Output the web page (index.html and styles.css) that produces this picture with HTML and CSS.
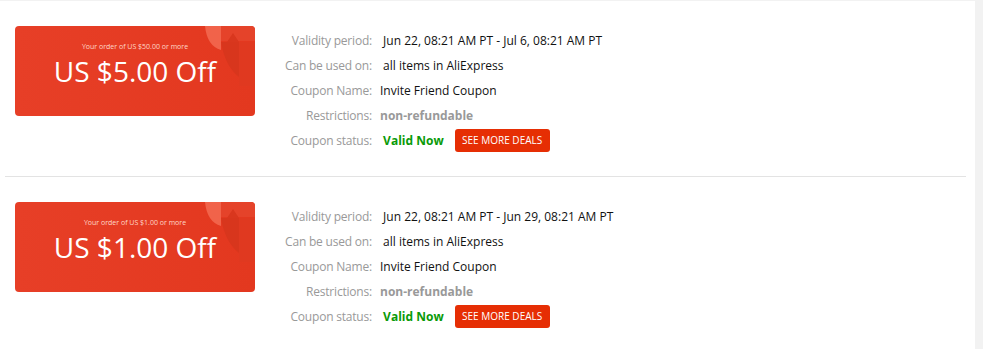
FILE: index.html
```html
<!DOCTYPE html>
<html>

<head>
    <meta charset="utf-8" />
    <title>My Coupons</title>
    <link rel="stylesheet" href="styles.css">
</head>

<body>
    <div class="panel">
        <div class="coupon">
            <div class="card">
                <svg class="deco" width="70" height="90" viewBox="0 0 70 90">
                    <path d="M0 0 H16 V24 Q2 20 0 0 Z" fill="#f1634a" />
                    <path d="M16 0 H50 V15 H16 Z" fill="#e5432a" />
                    <path d="M28 7 L34 16 H22 Z" fill="#d9371e" />
                    <path d="M16 16 H34 V51 Q20 40 16 16 Z" fill="#d8361d" />
                    <path d="M34 16 H50 V60 H34 Z" fill="#e03920" />
                </svg>
                <p class="min">Your order of US $50.00 or more</p>
                <p class="amount">US $5.00 Off</p>
            </div>
            <div class="details">
                <span class="label">Validity period:</span>
                <span class="value">&nbsp;Jun 22, 08:21 AM PT - Jul 6, 08:21 AM PT</span>
                <span class="label">Can be used on:</span>
                <span class="value">&nbsp;all items in AliExpress</span>
                <span class="label">Coupon Name:</span>
                <span class="value">Invite Friend Coupon</span>
                <span class="label">Restrictions:</span>
                <span class="value muted">non-refundable</span>
                <span class="label">Coupon status:</span>
                <span class="value"><b class="valid">&nbsp;Valid Now</b><a class="btn" href="#">SEE MORE DEALS</a></span>
            </div>
        </div>
        <div class="coupon">
            <div class="card">
                <svg class="deco" width="70" height="90" viewBox="0 0 70 90">
                    <path d="M0 0 H16 V24 Q2 20 0 0 Z" fill="#f1634a" />
                    <path d="M16 0 H50 V15 H16 Z" fill="#e5432a" />
                    <path d="M28 7 L34 16 H22 Z" fill="#d9371e" />
                    <path d="M16 16 H34 V51 Q20 40 16 16 Z" fill="#d8361d" />
                    <path d="M34 16 H50 V60 H34 Z" fill="#e03920" />
                </svg>
                <p class="min">Your order of US $1.00 or more</p>
                <p class="amount">US $1.00 Off</p>
            </div>
            <div class="details">
                <span class="label">Validity period:</span>
                <span class="value">&nbsp;Jun 22, 08:21 AM PT - Jun 29, 08:21 AM PT</span>
                <span class="label">Can be used on:</span>
                <span class="value">&nbsp;all items in AliExpress</span>
                <span class="label">Coupon Name:</span>
                <span class="value">Invite Friend Coupon</span>
                <span class="label">Restrictions:</span>
                <span class="value muted">non-refundable</span>
                <span class="label">Coupon status:</span>
                <span class="value"><b class="valid">&nbsp;Valid Now</b><a class="btn" href="#">SEE MORE DEALS</a></span>
            </div>
        </div>
    </div>
</body>

</html>
```

FILE: styles.css
```css
body {
    margin: 0;
    background: #f2f2f2;
    font-family: "Open Sans", Arial, sans-serif;
}

.panel {
    width: 975px;
    height: 348px;
    margin-top: 1px;
    background: #fff;
}

.coupon {
    display: flex;
    margin: 0 9px 0 5px;
    padding: 25px 0 23px 10px;
    border-bottom: 1px solid #e3e3e3;
}

.coupon:last-child {
    border-bottom: none;
}

.card {
    position: relative;
    width: 240px;
    height: 90px;
    border-radius: 4px;
    background: #e63c23;
    background-image: linear-gradient(to right, #e73f27, #e3381f);
    color: #fff;
    text-align: center;
    padding-top: 16px;
    box-sizing: border-box;
    overflow: hidden;
}

.deco {
    position: absolute;
    top: 0;
    left: 190px;
}

.card p {
    position: relative;
    margin: 0;
}

.min {
    font-size: 7px;
    line-height: 10px;
    color: #ffd7c9;
}

.amount {
    font-size: 28px;
    line-height: 38px;
}

.details {
    display: grid;
    grid-template-columns: 102px auto;
    column-gap: 8px;
    align-content: start;
    margin: 2px 0 0 15px;
    font-size: 12px;
    line-height: 25px;
}

.label {
    color: #999;
    text-align: right;
    letter-spacing: -0.2px;
}

.value {
    color: #111;
    display: flex;
    align-items: center;
}

.muted {
    color: #999;
    font-weight: bold;
}

.valid {
    color: #0a9a08;
}

.btn {
    display: inline-block;
    margin-left: 11px;
    width: 95px;
    height: 23px;
    line-height: 23px;
    border-radius: 3px;
    background: #e62e04;
    color: #fff;
    font-size: 10px;
    text-align: center;
    text-decoration: none;
}
```
